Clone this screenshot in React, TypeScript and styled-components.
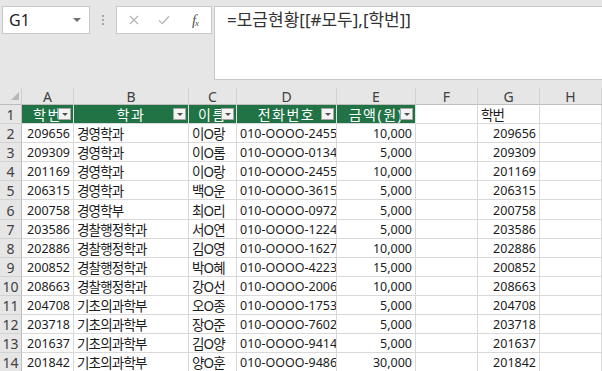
import React from 'react'
import styled, { createGlobalStyle } from 'styled-components'

const GlobalStyle = createGlobalStyle`
  html, body {
    margin: 0;
    padding: 0;
    background: #ffffff;
  }
  body {
    font-family: "Noto Sans", "Noto Sans CJK KR", sans-serif;
  }
`

const Window = styled.div`
  width: 602px;
  height: 371px;
  overflow: hidden;
  background: #ffffff;
`

const FormulaArea = styled.div`
  display: flex;
  align-items: flex-start;
  height: 88px;
  box-sizing: border-box;
  padding: 6px 0 0 2px;
  background: #e6e6e6;
`

const NameBox = styled.div`
  width: 88px;
  height: 28px;
  box-sizing: border-box;
  display: flex;
  align-items: center;
  justify-content: space-between;
  padding: 0 8px 0 6px;
  background: #ffffff;
  border: 1px solid #c8c8c8;
  font-size: 16px;
  color: #262626;
`

const Caret = styled.span`
  width: 0;
  height: 0;
  border-left: 4px solid transparent;
  border-right: 4px solid transparent;
  border-top: 4px solid #707070;
`

const Grip = styled.div`
  width: 26px;
  height: 28px;
  display: flex;
  flex-direction: column;
  align-items: center;
  justify-content: center;
  gap: 2px;
`

const GripDot = styled.span`
  width: 2px;
  height: 2px;
  background: #a8a8a8;
`

const FxButtons = styled.div`
  width: 96px;
  height: 28px;
  box-sizing: border-box;
  display: flex;
  align-items: center;
  padding-left: 2px;
  background: #ffffff;
  border: 1px solid #c8c8c8;
`

const IconSlot = styled.span<{ $w: number }>`
  width: ${p => p.$w}px;
  display: flex;
  justify-content: center;
  align-items: center;
`

const FxLabel = styled.span`
  font-family: "Liberation Serif", serif;
  font-style: italic;
  font-size: 15px;
  color: #555555;
  letter-spacing: -1px;
  sub {
    font-size: 9px;
    vertical-align: -1px;
  }
`

const FormulaInput = styled.div`
  flex: 1;
  height: 74px;
  margin-left: 2px;
  box-sizing: border-box;
  padding: 2px 0 0 12px;
  background: #ffffff;
  border: 1px solid #c8c8c8;
  border-right: none;
  font-size: 17px;
  line-height: 21px;
  color: #333333;
  white-space: nowrap;
`

const Sheet = styled.div`
  display: grid;
  grid-template-columns: 22px 52px 115px 48px 100px 79px 62px 62px 62px;
  grid-template-rows: 17px;
  grid-auto-rows: 19.1px;
`

const Corner = styled.div`
  box-sizing: border-box;
  display: flex;
  align-items: flex-end;
  justify-content: flex-end;
  padding: 0 2px 4px 0;
  background: #e6e6e6;
  border-right: 1px solid #cfcfcf;
  border-bottom: 1px solid #bdbdbd;
`

const SelectAll = styled.span`
  width: 0;
  height: 0;
  border-left: 8px solid transparent;
  border-bottom: 8px solid #b8b8b8;
`

const ColHead = styled.div`
  box-sizing: border-box;
  display: flex;
  align-items: center;
  justify-content: center;
  background: #e6e6e6;
  border-right: 1px solid #d2d2d2;
  border-bottom: 1px solid #bdbdbd;
  font-size: 14px;
  color: #404040;
`

const RowHead = styled.div`
  box-sizing: border-box;
  display: flex;
  align-items: flex-end;
  justify-content: center;
  background: #e6e6e6;
  border-right: 1px solid #bdbdbd;
  border-bottom: 1px solid #d2d2d2;
  font-size: 14px;
  line-height: 17px;
  color: #404040;
`

const Cell = styled.div<{ $align: 'left' | 'right'; $hangul?: boolean }>`
  box-sizing: border-box;
  display: flex;
  align-items: flex-end;
  justify-content: ${p => (p.$align === 'right' ? 'flex-end' : 'flex-start')};
  padding: 0 3px 0 3px;
  overflow: hidden;
  white-space: nowrap;
  border-right: 1px solid #d9d9d9;
  border-bottom: 1px solid #d9d9d9;
  font-size: ${p => (p.$hangul ? '13.5px' : '12.5px')};
  letter-spacing: ${p => (p.$hangul ? '-0.8px' : '0')};
  line-height: 16px;
  color: #1c1c1c;
`

const TableHead = styled.div`
  position: relative;
  box-sizing: border-box;
  display: flex;
  align-items: center;
  justify-content: center;
  overflow: hidden;
  white-space: nowrap;
  background: #217346;
  border-right: 1px solid #d8e6dc;
  border-bottom: 1px solid #d9d9d9;
  font-size: 14px;
  letter-spacing: 1.5px;
  color: #ffffff;
`

const FilterButton = styled.span`
  position: absolute;
  right: 2px;
  top: 3px;
  width: 13px;
  height: 12px;
  box-sizing: border-box;
  display: flex;
  align-items: center;
  justify-content: center;
  background: #f4f4f4;
  border: 1px solid #a6a6a6;
  &::after {
    content: '';
    border-left: 3px solid transparent;
    border-right: 3px solid transparent;
    border-top: 3px solid #505050;
  }
`

const letters = ['A', 'B', 'C', 'D', 'E', 'F', 'G', 'H']
const headers = ['학번', '학과', '이름', '전화번호', '금액(원)']
const aligns: ('left' | 'right')[] = ['right', 'left', 'left', 'left', 'right', 'left', 'right', 'left']

const rows = [
  ['209656', '경영학과', '이O랑', '010-OOOO-2455', '10,000', '', '209656', ''],
  ['209309', '경영학과', '이O롬', '010-OOOO-0134', '5,000', '', '209309', ''],
  ['201169', '경영학과', '이O랑', '010-OOOO-2455', '10,000', '', '201169', ''],
  ['206315', '경영학과', '백O운', '010-OOOO-3615', '5,000', '', '206315', ''],
  ['200758', '경영학부', '최O리', '010-OOOO-0972', '5,000', '', '200758', ''],
  ['203586', '경찰행정학과', '서O연', '010-OOOO-1224', '5,000', '', '203586', ''],
  ['202886', '경찰행정학과', '김O영', '010-OOOO-1627', '10,000', '', '202886', ''],
  ['200852', '경찰행정학과', '박O혜', '010-OOOO-4223', '15,000', '', '200852', ''],
  ['208663', '경찰행정학과', '강O선', '010-OOOO-2006', '10,000', '', '208663', ''],
  ['204708', '기초의과학부', '오O종', '010-OOOO-1753', '5,000', '', '204708', ''],
  ['203718', '기초의과학부', '장O준', '010-OOOO-7602', '5,000', '', '203718', ''],
  ['201637', '기초의과학부', '김O양', '010-OOOO-9414', '5,000', '', '201637', ''],
  ['201842', '기초의과학부', '양O훈', '010-OOOO-9486', '30,000', '', '201842', ''],
]

const App: React.FC = () => {
  return (
    <Window>
      <GlobalStyle />
      <FormulaArea>
        <NameBox>
          G1
          <Caret />
        </NameBox>
        <Grip>
          <GripDot />
          <GripDot />
          <GripDot />
        </Grip>
        <FxButtons>
          <IconSlot $w={30}>
            <svg width="10" height="10" viewBox="0 0 10 10">
              <path d="M1 1L9 9M9 1L1 9" stroke="#b4b4b4" strokeWidth="1.2" fill="none" />
            </svg>
          </IconSlot>
          <IconSlot $w={30}>
            <svg width="12" height="10" viewBox="0 0 12 10">
              <path d="M1 5.5L4.3 8.6L11 1.2" stroke="#b4b4b4" strokeWidth="1.3" fill="none" />
            </svg>
          </IconSlot>
          <IconSlot $w={32}>
            <FxLabel>
              f<sub>x</sub>
            </FxLabel>
          </IconSlot>
        </FxButtons>
        <FormulaInput>=모금현황[[#모두],[학번]]</FormulaInput>
      </FormulaArea>

      <Sheet>
        <Corner>
          <SelectAll />
        </Corner>
        {letters.map(l => (
          <ColHead key={l}>{l}</ColHead>
        ))}

        <RowHead>1</RowHead>
        {headers.map(h => (
          <TableHead key={h}>
            {h}
            <FilterButton />
          </TableHead>
        ))}
        <Cell $align="left" />
        <Cell $align="left" $hangul>
          학번
        </Cell>
        <Cell $align="left" />

        {rows.map((r, i) => (
          <React.Fragment key={i}>
            <RowHead>{i + 2}</RowHead>
            {r.map((v, j) => (
              <Cell key={j} $align={aligns[j]} $hangul={j === 1 || j === 2}>
                {v}
              </Cell>
            ))}
          </React.Fragment>
        ))}
      </Sheet>
    </Window>
  )
}

export default App
